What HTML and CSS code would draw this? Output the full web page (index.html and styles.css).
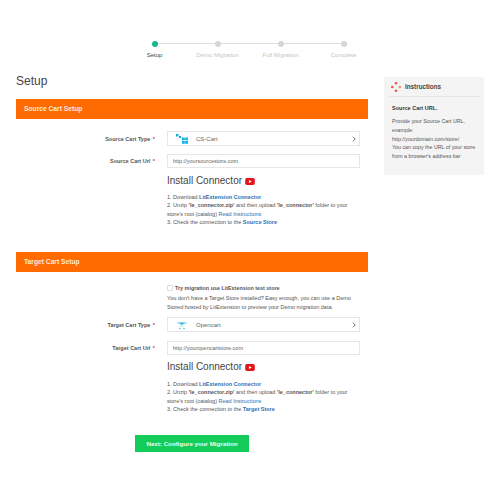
FILE: index.html
```html
<!DOCTYPE html>
<html lang="en">
<head>
    <meta charset="UTF-8">
    <title>Setup</title>
    <link rel="stylesheet" href="styles.css">
</head>
<body>

    <!-- Progress steps -->
    <ol class="steps">
        <li class="step active"><span class="dot"></span>Setup</li>
        <li class="step"><span class="dot"></span>Demo Migration</li>
        <li class="step"><span class="dot"></span>Full Migration</li>
        <li class="step"><span class="dot"></span>Complete</li>
    </ol>

    <div class="page">
        <main class="content">
            <h1>Setup</h1>

            <section class="cart-section">
                <h2 class="bar">Source Cart Setup</h2>
                <div class="row select-row">
                    <label>Source Cart Type <b>*</b></label>
                    <div class="field select">
                        <svg class="cart-logo" viewBox="0 0 12 12">
                            <rect x="0" y="1" width="2.500" height="2.500" fill="#1fa8e8"/>
                            <rect x="3" y="3" width="2" height="2" fill="#1fa8e8"/>
                            <rect x="6" y="4.500" width="2.800" height="2.800" fill="#14b4ee"/>
                            <rect x="9.200" y="4.500" width="2.800" height="2.800" fill="#14b4ee"/>
                            <rect x="6" y="8" width="2.800" height="2.800" fill="#14b4ee"/>
                            <rect x="9.200" y="8" width="2.800" height="2.800" fill="#14b4ee"/>
                        </svg>
                        <span class="select-name">CS-Cart</span>
                        <svg class="chevron" viewBox="0 0 4 6"><path d="M1 .8 3.200 3 1 5.200" fill="none" stroke="#444" stroke-width=".8"/></svg>
                    </div>
                </div>
                <div class="row url-row">
                    <label>Source Cart Url <b>*</b></label>
                    <div class="field">http://yoursourcestore.com</div>
                </div>
                <div class="connector">
                    <h3>Install Connector
                        <svg class="yt" viewBox="0 0 11 8"><rect width="11" height="8" rx="2" fill="#e5141b"/><path d="M4.300 2.200 7.600 4 4.300 5.800z" fill="#fff"/></svg>
                    </h3>
                    <p>1. Download <a>LitExtension Connector</a></p>
                    <p>2. Unzip <strong>'le_connector.zip'</strong> and then upload <strong>'le_connector'</strong> folder to your store's root (catalog) <a class="plain">Read Instructions</a></p>
                    <p>3. Check the connection to the <a>Source Store</a></p>
                </div>
            </section>

            <section class="cart-section target">
                <h2 class="bar">Target Cart Setup</h2>
                <div class="demo">
                    <div class="try"><span class="checkbox"></span><strong>Try migration use LitExtension test store</strong></div>
                    <p>You don't have a Target Store installed? Easy enough, you can use a Demo Stored hosted by LitExtension to preview your Demo migration data.</p>
                </div>
                <div class="row select-row">
                    <label>Target Cart Type <b>*</b></label>
                    <div class="field select">
                        <svg class="cart-logo" viewBox="0 0 12 12">
                            <path d="M0 4c4-1 8-.800 12 0-3 .200-5 1-6.500 2.500C5 5 3 4.300 0 4z" fill="#3fc4e0"/>
                            <path d="M3 7.500h5" stroke="#9fdcec" stroke-width=".5"/>
                            <circle cx="4" cy="9.500" r=".8" fill="#3fc4e0"/>
                            <circle cx="8" cy="9.500" r=".8" fill="#3fc4e0"/>
                        </svg>
                        <span class="select-name">Opencart</span>
                        <svg class="chevron" viewBox="0 0 4 6"><path d="M1 .8 3.200 3 1 5.200" fill="none" stroke="#444" stroke-width=".8"/></svg>
                    </div>
                </div>
                <div class="row url-row">
                    <label>Target Cart Url <b>*</b></label>
                    <div class="field">http://youropencartstore.com</div>
                </div>
                <div class="connector">
                    <h3>Install Connector
                        <svg class="yt" viewBox="0 0 11 8"><rect width="11" height="8" rx="2" fill="#e5141b"/><path d="M4.300 2.200 7.600 4 4.300 5.800z" fill="#fff"/></svg>
                    </h3>
                    <p>1. Download <a>LitExtension Connector</a></p>
                    <p>2. Unzip <strong>'le_connector.zip'</strong> and then upload <strong>'le_connector'</strong> folder to your store's root (catalog) <a class="plain">Read Instructions</a></p>
                    <p>3. Check the connection to the <a>Target Store</a></p>
                </div>
            </section>

            <button class="next">Next: Configure your Migration</button>
        </main>

        <!-- Instructions panel -->
        <aside class="instructions">
            <h4>
                <svg class="ins-icon" viewBox="0 0 12 12">
                    <circle cx="6" cy="1.500" r="1.500" fill="#e8563f"/>
                    <circle cx="1.500" cy="6" r="1.500" fill="#e8563f"/>
                    <circle cx="10.500" cy="6" r="1.500" fill="#f08a78"/>
                    <circle cx="6" cy="10.500" r="1.500" fill="#e8563f"/>
                </svg>
                Instructions
            </h4>
            <h5>Source Cart URL.</h5>
            <p>Provide your Source Cart URL, example:<br>http://yourdomain.com/store/</p>
            <p>You can copy the URL of your store from a browser's address bar</p>
        </aside>
    </div>

</body>
</html>
```

FILE: styles.css
```css
body {
    margin: 0;
    background-color: #fff;
    color: #444;
    font-family: "Liberation Sans", Arial, sans-serif;
    font-size: 5.500px;
}

/* Progress steps */
.steps {
    display: flex;
    justify-content: center;
    width: 252px;
    margin: 0 0 0 123px;
    padding: 41px 0 0 0;
    list-style: none;
}

.step {
    position: relative;
    flex: 1;
    display: flex;
    flex-direction: column;
    align-items: center;
    gap: 5px;
    color: #c4c4c4;
    font-size: 6px;
}

.step:before {
    content: '';
    position: absolute;
    top: 2px;
    left: 50%;
    width: 100%;
    height: 1px;
    background-color: #ddd;
}

.step:last-child:before {
    display: none;
}

.dot {
    position: relative;
    width: 6px;
    height: 6px;
    background-color: #d6d6d6;
    border-radius: 50%;
}

.step.active {
    color: #444;
}

.step.active .dot {
    background-color: #17b890;
}

/* Two columns */
.page {
    display: grid;
    grid-template-columns: 352px 100px;
    gap: 16px;
    padding-left: 16px;
    align-items: start;
}

h1 {
    margin: 16px 0 11px;
    font-size: 12px;
    line-height: 14px;
    font-weight: normal;
    color: #444;
}

.bar {
    margin: 0;
    padding-left: 8px;
    height: 20px;
    line-height: 20px;
    background-color: #ff6b00;
    color: #ffe9d8;
    font-size: 6.700px;
    font-weight: bold;
}

.row {
    display: grid;
    grid-template-columns: 139px 193px;
    gap: 12px;
    align-items: center;
}

.row label {
    text-align: right;
    font-weight: bold;
    color: #555;
    font-size: 5.500px;
}

.row label b {
    color: #e03030;
    margin-left: 1px;
}

.select-row {
    margin-top: 12px;
}

.url-row {
    margin-top: 8px;
}

.field {
    box-sizing: border-box;
    height: 14px;
    line-height: 12px;
    padding-left: 5px;
    border: 1px solid #e6e6e6;
    color: #666;
    font-size: 5.500px;
}

.select {
    display: flex;
    align-items: center;
    height: 15px;
    padding-left: 8px;
    padding-right: 3px;
}

.cart-logo {
    width: 12px;
    height: 12px;
}

.select-name {
    flex: 1;
    margin-left: 8px;
    font-size: 6px;
}

.chevron {
    width: 4px;
    height: 6px;
}

.connector {
    margin: 7px 0 0 151px;
    width: 190px;
}

.connector h3 {
    display: flex;
    align-items: center;
    gap: 3px;
    margin: 0 0 6px;
    font-size: 10px;
    line-height: 12px;
    font-weight: normal;
    color: #444;
}

.yt {
    width: 10px;
    height: 7px;
}

.connector p {
    margin: 0;
    line-height: 8.300px;
    color: #555;
}

.connector a {
    color: #2a6fb5;
    font-weight: bold;
}

.connector a.plain {
    font-weight: normal;
}

.target {
    margin-top: 26px;
}

.demo {
    margin: 13px 0 0 151px;
    width: 190px;
}

.try {
    display: flex;
    align-items: center;
    gap: 2px;
    font-size: 5.400px;
    color: #555;
}

.checkbox {
    width: 4px;
    height: 4px;
    border: 0.500px solid #ddd;
    border-radius: 1px;
}

.demo p {
    margin: 3px 0 0;
    line-height: 9px;
    color: #555;
}

.target .select-row {
    margin-top: 5px;
}

.target .url-row {
    margin-top: 9px;
}

.target .connector {
    margin-top: 6px;
}

.target .connector h3 {
    margin-bottom: 7px;
}

.next {
    display: block;
    width: 114px;
    height: 17px;
    margin: 22px 0 0 119px;
    padding: 0;
    border: none;
    background-color: #13cc5a;
    color: #eafff0;
    font-family: inherit;
    font-size: 6.200px;
    font-weight: bold;
}

/* Instructions panel */
.instructions {
    box-sizing: border-box;
    height: 98px;
    margin-top: 19px;
    padding: 0 5px 0 8px;
    background-color: #f4f4f4;
    font-size: 5.300px;
    color: #555;
}

.instructions h4 {
    display: flex;
    align-items: center;
    gap: 4px;
    height: 19px;
    margin: 0 0 8px -3px;
    padding: 0 3px;
    font-size: 6.300px;
    color: #444;
    border-bottom: 1px solid #e4e4e4;
}

.ins-icon {
    width: 10px;
    height: 10px;
    margin-left: -1px;
}

.instructions h5 {
    margin: 0 0 6px;
    font-size: 5.500px;
    color: #333;
}

.instructions p {
    margin: 0;
    line-height: 8.800px;
}
```
